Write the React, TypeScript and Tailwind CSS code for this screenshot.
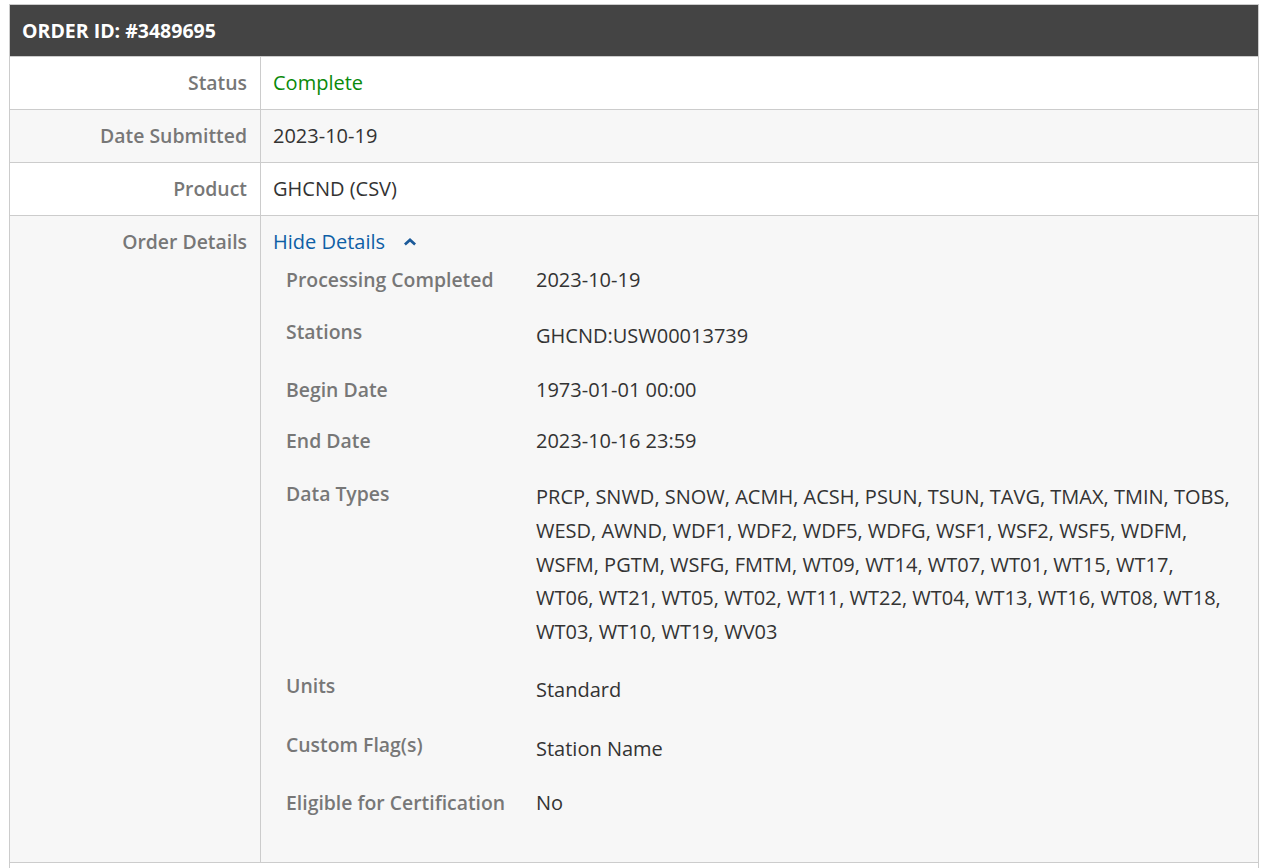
type Row = { label: string; value: React.ReactNode; bg: string };

type DetailRow = {
  label: string;
  value: string;
  gap: string; // space above the row
  valueOffset?: string;
  wide?: boolean;
};

const dataTypes =
  "PRCP, SNWD, SNOW, ACMH, ACSH, PSUN, TSUN, TAVG, TMAX, TMIN, TOBS, WESD, AWND, WDF1, WDF2, WDF5, WDFG, WSF1, WSF2, WSF5, WDFM, WSFM, PGTM, WSFG, FMTM, WT09, WT14, WT07, WT01, WT15, WT17, WT06, WT21, WT05, WT02, WT11, WT22, WT04, WT13, WT16, WT08, WT18, WT03, WT10, WT19, WV03";

const details: DetailRow[] = [
  { label: "Processing Completed", value: "2023-10-19", gap: "mt-[11px]" },
  { label: "Stations", value: "GHCND:USW00013739", gap: "mt-[25px]", valueOffset: "pt-[4px]" },
  { label: "Begin Date", value: "1973-01-01 00:00", gap: "mt-[27px]" },
  { label: "End Date", value: "2023-10-16 23:59", gap: "mt-[24px]" },
  { label: "Data Types", value: dataTypes, gap: "mt-[26px]", wide: true },
  { label: "Units", value: "Standard", gap: "mt-[23px]", valueOffset: "pt-[4px]" },
  { label: "Custom Flag(s)", value: "Station Name", gap: "mt-[28px]", valueOffset: "pt-[4px]" },
  { label: "Eligible for Certification", value: "No", gap: "mt-[27px]" },
];

function SummaryRow({ label, value, bg }: Row) {
  return (
    <div className={`flex h-[53px] border-t border-[#cccccc] ${bg}`}>
      <div className="flex w-[251px] items-center justify-end border-r border-[#cccccc] pr-[13px] text-[19.4px] font-semibold text-[#777777]">
        {label}
      </div>
      <div className="flex flex-1 items-center pl-[12px] text-[#333333]">{value}</div>
    </div>
  );
}

function ChevronUp() {
  return (
    <svg width="12" height="8" viewBox="0 0 12 8" className="mt-[1px]" aria-hidden>
      <path d="M6 0 L12 5.6 L10.2 7.5 L6 3.8 L1.8 7.5 L0 5.6 Z" fill="#1b5a9a" />
    </svg>
  );
}

export default function App() {
  return (
    <div className="min-h-screen bg-white pt-[4px] font-['Open_Sans',sans-serif] text-[20px]">
      <div className="ml-[9px] w-[1250px] border-x border-t border-[#cccccc]">
        <div className="flex h-[51px] items-center bg-[#444444] pl-[12px] text-[19.5px] font-bold text-white">
          ORDER ID: #3489695
        </div>
        <SummaryRow label="Status" value={<span className="text-[#0a8a0a]">Complete</span>} bg="bg-white" />
        <SummaryRow label="Date Submitted" value="2023-10-19" bg="bg-[#f7f7f7]" />
        <SummaryRow label="Product" value="GHCND (CSV)" bg="bg-white" />

        <div className="flex border-t border-[#cccccc] bg-[#f7f7f7]">
          <div className="w-[251px] border-r border-[#cccccc] pr-[13px] pt-[12px] text-right text-[19.4px] font-semibold leading-[27px] text-[#777777]">
            Order Details
          </div>
          <div className="flex-1 pl-[12px] pt-[12px] pb-[46px]">
            <div className="flex items-center gap-[19px] leading-[27px] text-[#0e5fa6]">
              <span>Hide Details</span>
              <ChevronUp />
            </div>
            <div className="pl-[13px]">
              {details.map((d) => (
                <div key={d.label} className={`flex ${d.gap}`}>
                  <div className="w-[250px] shrink-0 text-[19.4px] font-semibold leading-[27px] text-[#777777]">
                    {d.label}
                  </div>
                  <div
                    className={`flex-1 pr-[26px] text-[#333333] ${d.valueOffset ?? ""} ${
                      d.wide ? "leading-[33.75px]" : "leading-[27px]"
                    }`}
                  >
                    {d.value}
                  </div>
                </div>
              ))}
            </div>
          </div>
        </div>
        <div className="h-[40px] border-t border-[#cccccc] bg-white" />
      </div>
    </div>
  );
}
